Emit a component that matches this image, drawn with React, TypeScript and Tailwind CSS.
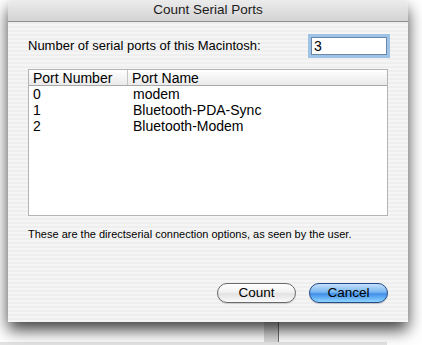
const rows = [
  { num: '0', name: 'modem' },
  { num: '1', name: 'Bluetooth-PDA-Sync' },
  { num: '2', name: 'Bluetooth-Modem' },
];

export default function App() {
  return (
    <div className="w-[422px] h-[345px] bg-white overflow-hidden font-['Liberation_Sans',Arial,sans-serif] text-black">
      <div className="relative z-10 ml-[8px] w-[400px] h-[322px] rounded-t-[5px] flex flex-col shadow-[0_8px_16px_rgba(0,0,0,0.75)] overflow-hidden">
        <div className="h-[22px] shrink-0 flex items-center justify-center bg-[linear-gradient(#ececec,#d3d3d3)] border-b border-[#8e8e8e] text-[13.5px] text-[#1b1b1b]">
          Count Serial Ports
        </div>

        <div className="flex-1 flex flex-col px-[20px] bg-[repeating-linear-gradient(#eeeeee_0_2px,#f5f5f5_2px_4px)]">
          <div className="mt-[15px] h-[18px] flex items-center justify-between text-[13px]">
            <span>Number of serial ports of this Macintosh:</span>
            <div className="mr-[1px] w-[76px] h-[18px] bg-white border border-[#6d87a8] shadow-[0_0_0_3px_#9fc3e7] flex items-center pl-[2px] text-[14px]">
              3
            </div>
          </div>

          <div className="mt-[14px] h-[147px] bg-white border border-[#b4b4b4] flex flex-col text-[14px]">
            <div className="h-[16px] flex bg-[linear-gradient(#ffffff,#eaeaea)] border-b border-[#a9a9a9] leading-[16px]">
              <div className="w-[99px] pl-[4px] border-r border-[#c4c4c4]">Port Number</div>
              <div className="pl-[4px]">Port Name</div>
            </div>
            {rows.map((r) => (
              <div key={r.num} className="h-[16px] flex leading-[17px]">
                <div className="w-[100px] pl-[4px]">{r.num}</div>
                <div className="pl-[4px]">{r.name}</div>
              </div>
            ))}
          </div>

          <p className="mt-[11px] text-[11px] leading-[14px]">
            These are the directserial connection options, as seen by the user.
          </p>

          <div className="mt-[42px] flex justify-end gap-[13px]">
            <button className="w-[79px] h-[20px] rounded-full border border-[#6a6a6a] bg-[linear-gradient(#ffffff_0%,#f1f1f1_45%,#e2e2e2_55%,#fafafa_100%)] text-[13.5px] leading-[18px] shadow-[0_1px_1px_rgba(0,0,0,0.15)]">
              Count
            </button>
            <button className="w-[79px] h-[20px] rounded-full border border-[#244a8a] bg-[linear-gradient(#c4e0fb_0%,#7ab6f0_45%,#3f8fe8_55%,#8fd4ff_100%)] text-[13.5px] leading-[18px] shadow-[0_1px_1px_rgba(0,0,0,0.2)]">
              Cancel
            </button>
          </div>
        </div>
      </div>

      <div className="h-[23px] flex flex-col">
        <div className="h-[20px] flex">
          <div className="ml-[264px] w-[15px] bg-[#dadada] border-r border-[#6f6f6f]" />
        </div>
        <div className="h-[3px] w-[387px] bg-[#e4e4e4]" />
      </div>
    </div>
  );
}
